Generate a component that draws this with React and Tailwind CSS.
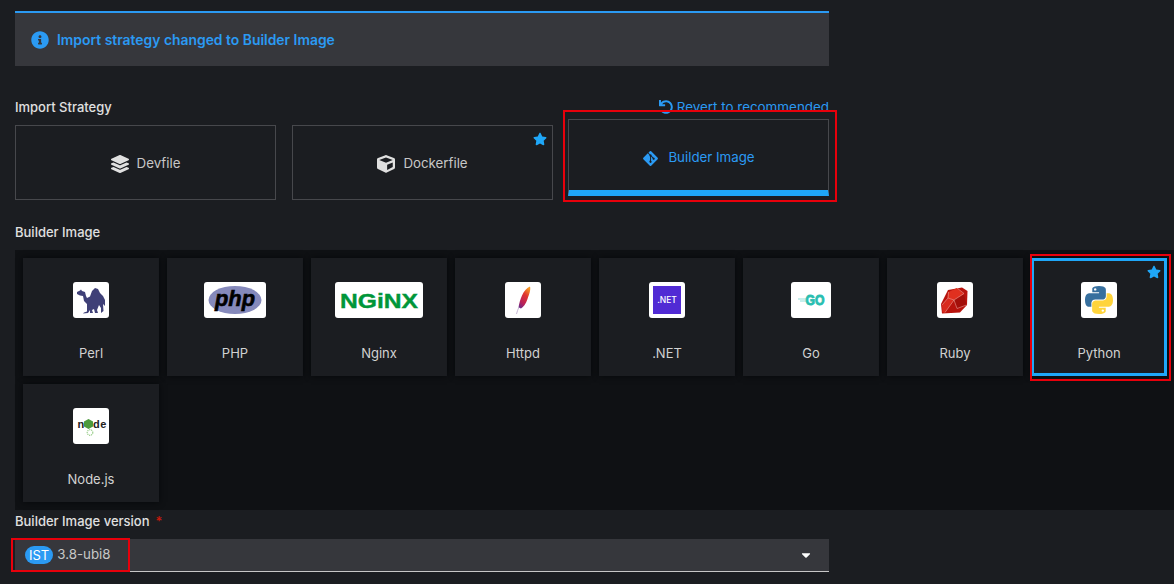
import { FaCaretDown, FaCube, FaGitAlt, FaInfoCircle, FaLayerGroup, FaStar, FaUndo } from "react-icons/fa"

const CamelLogo = () => (
  <svg viewBox="0 0 36 36" className="w-full h-full">
    <path fill="#3f4077" d="M4 10l3-1.500 1-1 1 1.500 3 1 1 4 1 2 3-1.500 2-5.500 3-3 3 1 2 4 3 3 2 4v6l-2-2 .5 7-2.500 2v-5l-2-3-2 5 1 3h-3l-1-4-2 1 1 3h-3v-3l-2 3-5 .5 1-1 3-1v-7.500l-3-3-1-5-3-.5-3-1.500z" />
  </svg>
)

const PhpLogo = () => (
  <svg viewBox="0 0 62 36" className="w-full h-full">
    <ellipse cx="31" cy="18" rx="26.500" ry="14" fill="#8589bb" />
    <text x="31" y="24" textAnchor="middle" textLength="40" lengthAdjust="spacingAndGlyphs" fontSize="22" fontWeight="700" fontStyle="italic" fill="#000" stroke="#000" strokeWidth="0.6" fontFamily="'Liberation Sans', sans-serif">php</text>
  </svg>
)

const NginxLogo = () => (
  <svg viewBox="0 0 88 36" className="w-full h-full">
    <text x="44" y="25.500" textAnchor="middle" textLength="78" lengthAdjust="spacingAndGlyphs" fontSize="21" fontWeight="700" fill="#009639" stroke="#009639" strokeWidth="0.4" fontFamily="'Liberation Sans', sans-serif">NGiNX</text>
  </svg>
)

const FeatherLogo = () => (
  <svg viewBox="0 0 36 36" className="w-full h-full">
    <defs>
      <linearGradient id="feather" x1="0.7" y1="0" x2="0.2" y2="1">
        <stop offset="0" stopColor="#f69923" />
        <stop offset="0.35" stopColor="#e0342f" />
        <stop offset="0.75" stopColor="#b8215a" />
        <stop offset="1" stopColor="#6d2a84" />
      </linearGradient>
    </defs>
    <path fill="url(#feather)" d="M25 4.500c-3 1-6 4.500-8 9-1.500 3.500-3 8-3.500 12l2.500 1c2.500-1.500 5-5 6.500-9.500 1.500-4.500 3.500-9 2.500-12.500z" />
    <path stroke="#b9a4c9" strokeWidth="0.8" fill="none" d="M11.500 32c.5-2 1.500-5 2.500-7" />
  </svg>
)

const DotnetLogo = () => (
  <div className="w-full h-full p-1">
    <div className="w-full h-full bg-[#512bd4] text-white text-[8.5px] font-medium flex items-center justify-center">.NET</div>
  </div>
)

const GoLogo = () => (
  <svg viewBox="0 0 40 36" className="w-full h-full">
    <path stroke="#8fdfd9" strokeWidth="1" d="M7 17h8M9 19h6" />
    <text x="24" y="23" textAnchor="middle" textLength="19" lengthAdjust="spacingAndGlyphs" fontSize="14" fontWeight="700" fill="#29beb0" stroke="#29beb0" strokeWidth="0.9" fontFamily="'Liberation Sans', sans-serif">GO</text>
  </svg>
)

const RubyLogo = () => (
  <svg viewBox="0 0 36 36" className="w-full h-full">
    <path fill="#b8130d" d="M11 8l14-2.500 5.500 3.500-.5 14-7 7.500-18 1L4 22z" />
    <path fill="#e0301f" d="M11.500 10l8.500-4 7 6-10 6-6.500-2z" />
    <path fill="#a30f0a" d="M17 18l10-6 2.500 11-9.500 3.500z" />
    <path fill="#d92b1e" d="M5 23l6-7 6 2-9 12.500H5.500z" />
    <path fill="none" stroke="#f3b7ae" strokeWidth="0.5" d="M11.500 10L11 16l6 2 10-6.500-7-5.500M17 18l3 8.500 9.500-3.500M11 16l-6 7M8 30.500L17 18" />
  </svg>
)

const PythonLogo = () => (
  <svg viewBox="0 0 110 110" className="w-full h-full p-[4px]">
    <path fill="#366f9e" d="M54.900 0C26.900 0 28.600 12.100 28.600 12.100v12.600h26.700v3.800H18C18 28.500 0 26.400 0 54.700s15.700 27.300 15.700 27.300h9.400V68.900s-.5-15.700 15.400-15.700h26.600s14.900.2 14.900-14.400V14.600S84.300 0 54.900 0zM40.100 8.500a4.800 4.800 0 1 1 0 9.600 4.800 4.800 0 0 1 0-9.600z" />
    <path fill="#ffd43b" transform="rotate(180 55 55)" d="M54.900 0C26.900 0 28.600 12.100 28.600 12.100v12.600h26.700v3.800H18C18 28.500 0 26.400 0 54.700s15.700 27.300 15.700 27.300h9.400V68.900s-.5-15.700 15.400-15.700h26.600s14.900.2 14.900-14.400V14.600S84.300 0 54.900 0zM40.100 8.500a4.800 4.800 0 1 1 0 9.600 4.800 4.800 0 0 1 0-9.600z" />
  </svg>
)

const NodeLogo = () => (
  <svg viewBox="0 0 36 36" className="w-full h-full">
    <path fill="#4c9a3c" d="M15.500 11l4.500 2.500v5L15.500 21 11 18.500v-5z" />
    <text x="4.500" y="20" fontSize="11" fontWeight="700" fill="#222" fontFamily="'Liberation Sans', sans-serif">n</text>
    <text x="20" y="20" fontSize="11" fontWeight="700" letterSpacing="0.6" fill="#222" fontFamily="'Liberation Sans', sans-serif">de</text>
    <circle cx="17" cy="24.500" r="2.800" fill="none" stroke="#9ccf8d" strokeWidth="1.200" strokeDasharray="1.200 0.800" />
  </svg>
)

const images = [
  { name: 'Perl', logo: <CamelLogo />, width: 'w-[36px]' },
  { name: 'PHP', logo: <PhpLogo />, width: 'w-[62px]' },
  { name: 'Nginx', logo: <NginxLogo />, width: 'w-[88px]' },
  { name: 'Httpd', logo: <FeatherLogo />, width: 'w-[36px]' },
  { name: '.NET', logo: <DotnetLogo />, width: 'w-[36px]' },
  { name: 'Go', logo: <GoLogo />, width: 'w-[40px]' },
  { name: 'Ruby', logo: <RubyLogo />, width: 'w-[36px]' },
  { name: 'Python', logo: <PythonLogo />, width: 'w-[36px]', selected: true },
  { name: 'Node.js', logo: <NodeLogo />, width: 'w-[36px]' },
]

const StrategyCard = ({ icon, name, starred }) => (
  <div className="relative w-[261px] h-[75px] pt-[2px] border border-[#47484c] flex items-center justify-center gap-[8px] text-[13.300px] text-[#c7c7c7]">
    {icon}
    <span>{name}</span>
    {starred && <FaStar className="absolute top-[6px] right-[5px] w-[14px] h-[14px] text-[#1fa7f8]" />}
  </div>
)

const ImageCard = ({ image }) => (
  <div className={`relative w-[136px] h-[118px] bg-[#1b1d21] shadow-[0_0_6px_#06080a] flex flex-col items-center pt-[24px] ${image.selected ? 'border-[3px] border-[#1fa7f8]' : ''}`}>
    <div className={`${image.selected ? '-mt-[3px]' : ''} h-[36px] ${image.width} bg-white rounded-[3px] overflow-hidden`}>
      {image.logo}
    </div>
    <div className="mt-[27px] text-[13px] leading-[16px] text-[#d2d2d2]">{image.name}</div>
    {image.selected && (
      <>
        <FaStar className="absolute top-[4px] right-[3px] w-[14px] h-[14px] text-[#1fa7f8]" />
        {/* red annotation box */}
        <div className="absolute -top-[7px] -bottom-[8px] -left-[4px] -right-[7px] border-[2px] border-[#e8000b] pointer-events-none" />
      </>
    )}
  </div>
)

const App = () => {
  return (
    <div className="w-[1174px] h-[584px] overflow-hidden bg-[#1b1d21] pt-[11px] pl-[15px] font-['Inter',sans-serif]">
      {/* Alert */}
      <div className="w-[814px] h-[55px] bg-[#36373c] border-t-2 border-[#2b9af3] flex items-center pl-[16px] gap-[8px] text-[#2b9af3] text-[13.900px] font-semibold">
        <FaInfoCircle className="w-[18px] h-[18px]" />
        <span className="pt-[1px]">Import strategy changed to Builder Image</span>
      </div>

      {/* Import strategy */}
      <div className="w-[814px] mt-[34px] h-[16px] flex items-center justify-between">
        <div className="text-[13px] font-medium text-[#e0e0e0]">Import Strategy</div>
        <div className="pb-[2px] flex items-center gap-[4px] text-[13.400px] text-[#2b9af3]">
          <FaUndo className="w-[14px] h-[14px]" />
          <span>Revert to recommended</span>
        </div>
      </div>

      <div className="w-[814px] mt-[9px] flex items-start gap-[16px]">
        <StrategyCard name="Devfile" icon={<FaLayerGroup className="w-[18px] h-[18px] text-[#e0e0e0]" />} />
        <StrategyCard name="Dockerfile" starred icon={<FaCube className="w-[18px] h-[18px] text-[#e0e0e0]" />} />
        <div className="relative -ml-[1px] -mt-[6px] w-[261px] h-[77px] pt-[6px] border border-[#47484c] border-b-[6px] border-b-[#1fa7f8] flex items-center justify-center gap-[9px] text-[13.300px] text-[#2b9af3]">
          <FaGitAlt className="w-[17px] h-[17px]" />
          <span>Builder Image</span>
          {/* red annotation box */}
          <div className="absolute -top-[10px] -bottom-[12px] -left-[6px] -right-[9px] border-[2px] border-[#e8000b] pointer-events-none" />
        </div>
      </div>

      {/* Builder image */}
      <div className="mt-[25px] h-[16px] flex items-center text-[13px] font-medium text-[#e0e0e0]">Builder Image</div>
      <div className="mt-[9px] w-[1160px] h-[260px] bg-[#0f1114] p-[8px] flex flex-wrap gap-[8px] content-start">
        {images.map((image) => <ImageCard key={image.name} image={image} />)}
      </div>

      {/* Version */}
      <div className="mt-[4px] h-[16px] flex items-center text-[13px] font-medium text-[#e0e0e0]">
        Builder Image version
        <span className="ml-[6px] text-[#c9190b]">*</span>
      </div>
      <div className="relative mt-[9px] w-[814px] h-[33px] bg-[#36373c] border-b border-[#c7c7c7] flex items-center pl-[10px] gap-[4px] text-[13.300px] text-[#c7c7c7]">
        <span className="h-[18px] px-[4px] rounded-full bg-[#2b9af3] text-white text-[13px] leading-[18px]">IST</span>
        <span>3.8-ubi8</span>
        <FaCaretDown className="absolute right-[16px] top-[9px] w-[14px] h-[14px] text-white" />
        {/* red annotation box */}
        <div className="absolute -top-[1px] -bottom-[1px] -left-[4px] w-[119px] border-[2px] border-[#e8000b] pointer-events-none" />
      </div>
    </div>
  )
}

export default App
